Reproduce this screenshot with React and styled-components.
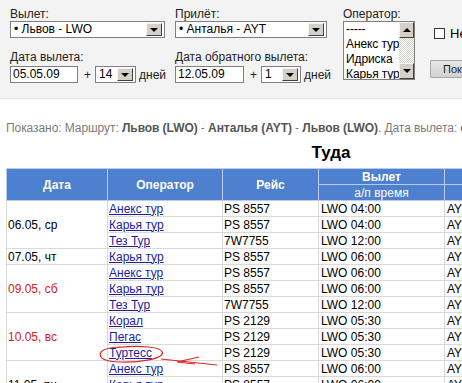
import React from "react";
import styled, { createGlobalStyle } from "styled-components";

const GlobalStyle = createGlobalStyle`
  html, body {
    margin: 0;
    padding: 0;
    background: #fff;
    overflow: hidden;
  }
  body {
    font-family: "Liberation Sans", Arial, sans-serif;
    font-size: 12px;
    color: #000;
  }
`;

const Page = styled.div`
  position: relative;
  width: 720px;
`;

const FilterPanel = styled.div`
  display: flex;
  align-items: flex-start;
  height: 99px;
  box-sizing: border-box;
  padding: 7px 0 0 10px;
  background: #f3f3f3;
  border-bottom: 1px solid #e8e8e8;
`;

const FieldColumn = styled.div`
  display: flex;
  flex-direction: column;
  flex-shrink: 0;
  width: ${(p) => p.$width}px;
  margin-right: ${(p) => p.$gap || 0}px;
`;

const Label = styled.div`
  font-size: 12px;
  line-height: 14px;
  color: #222;
  white-space: nowrap;
  margin-top: ${(p) => p.$top || 0}px;
`;

const SelectBox = styled.div`
  display: flex;
  align-items: center;
  flex-shrink: 0;
  width: ${(p) => p.$width}px;
  height: 17px;
  box-sizing: border-box;
  padding: 1px 2px 1px 1px;
  border: 1px solid #7f7f7f;
  background: #fff;
`;

const SelectValue = styled.span`
  flex: 1;
  padding-left: 2px;
  font-size: 12px;
  line-height: 13px;
  white-space: nowrap;
  overflow: hidden;
`;

const DropButton = styled.span`
  display: flex;
  align-items: center;
  justify-content: center;
  width: 16px;
  height: 13px;
  box-sizing: border-box;
  background: #d4d0c8;
  border: 1px solid;
  border-color: #f4f4f4 #404040 #404040 #f4f4f4;
  &::after {
    content: "";
    border-left: 4px solid transparent;
    border-right: 4px solid transparent;
    border-top: 4px solid #000;
  }
`;

const DateRow = styled.div`
  display: flex;
  align-items: center;
  margin-top: 2px;
  white-space: nowrap;
`;

const DateInput = styled.div`
  flex-shrink: 0;
  width: ${(p) => p.$width}px;
  height: 17px;
  box-sizing: border-box;
  padding-left: 2px;
  border: 1px solid #7f7f7f;
  background: #fff;
  font-size: 12px;
  line-height: 15px;
`;

const Plus = styled.span`
  margin: 0 4px 0 6px;
  color: #222;
`;

const Days = styled.span`
  margin-left: 3px;
  color: #222;
`;

const ListBox = styled.div`
  display: flex;
  width: 72px;
  height: 59px;
  box-sizing: border-box;
  border: 1px solid #7f7f7f;
  background: #fff;
`;

const ListItems = styled.div`
  flex: 1;
  padding: 0 0 0 2px;
  overflow: hidden;
`;

const ListItem = styled.div`
  font-size: 12px;
  line-height: 15px;
  letter-spacing: -0.1px;
  white-space: nowrap;
`;

const ScrollBar = styled.div`
  display: flex;
  flex-direction: column;
  justify-content: space-between;
  width: 15px;
  background-color: #fff;
  background-image: conic-gradient(#d4d0c8 25%, #fff 0 50%, #d4d0c8 0 75%, #fff 0);
  background-size: 2px 2px;
`;

const ScrollArrow = styled.div`
  display: flex;
  align-items: center;
  justify-content: center;
  height: 16px;
  box-sizing: border-box;
  background: #d4d0c8;
  border: 1px solid;
  border-color: #f4f4f4 #404040 #404040 #f4f4f4;
  &::after {
    content: "";
    border-left: 4px solid transparent;
    border-right: 4px solid transparent;
    ${(p) => (p.$up ? "border-bottom: 4px solid #000;" : "border-top: 4px solid #000;")}
  }
`;

const CheckRow = styled.label`
  display: flex;
  align-items: center;
  margin: 19px 0 0 4px;
  font-size: 13px;
  white-space: nowrap;
`;

const CheckSquare = styled.span`
  width: 11px;
  height: 11px;
  box-sizing: border-box;
  margin-right: 5px;
  border: 1px solid #333;
  background: #fff;
`;

const ShowButton = styled.button`
  margin-top: 19px;
  height: 18px;
  padding: 0 12px;
  border: 1px solid #a8a8a8;
  border-radius: 1px;
  background: linear-gradient(#e6e6e6, #d2d2d2);
  font-family: "Liberation Sans", Arial, sans-serif;
  font-size: 11px;
  color: #222;
  white-space: nowrap;
`;

const Content = styled.div`
  padding: 0 6px;
`;

const Summary = styled.div`
  margin-top: 22px;
  font-size: 12px;
  line-height: 14px;
  letter-spacing: -0.07px;
  color: #7b7b7b;
  white-space: nowrap;
  b {
    color: #555;
  }
`;

const Heading = styled.h2`
  width: 650px;
  margin: 8px 0 5px;
  text-align: center;
  font-size: 17px;
  line-height: 20px;
  font-weight: bold;
  color: #000;
`;

const Schedule = styled.table`
  width: 654px;
  border-collapse: collapse;
  table-layout: fixed;
  font-size: 12px;
`;

const Row = styled.tr`
  height: 16px;
`;

const HeadCell = styled.th`
  padding: 0;
  border: 1px solid #b7cbed;
  background: #4d80cf;
  color: #fff;
  line-height: 14px;
  text-align: center;
  font-weight: ${(p) => (p.$light ? "normal" : "bold")};
`;

const Cell = styled.td`
  padding: 0 0 0 ${(p) => p.$pad || 1}px;
  border: 1px solid #d9d9d9;
  line-height: 14px;
  white-space: nowrap;
  overflow: hidden;
  color: ${(p) => (p.$red ? "#d01c1c" : "#000")};
`;

const OperatorLink = styled.a`
  color: #1d1d9e;
  text-decoration: underline;
`;

const Annotation = styled.svg`
  position: absolute;
  top: 0;
  left: 0;
  pointer-events: none;
`;

const schedule = [
  {
    date: "06.05, ср",
    flights: [
      ["Анекс тур", "PS 8557", "LWO 04:00", "AYT 07:10"],
      ["Карья тур", "PS 8557", "LWO 04:00", "AYT 07:10"],
      ["Тез Тур", "7W7755", "LWO 12:00", "AYT 15:05"],
    ],
  },
  {
    date: "07.05, чт",
    flights: [["Карья тур", "PS 8557", "LWO 06:00", "AYT 09:10"]],
  },
  {
    date: "09.05, сб",
    red: true,
    flights: [
      ["Анекс тур", "PS 8557", "LWO 06:00", "AYT 09:10"],
      ["Карья тур", "PS 8557", "LWO 06:00", "AYT 09:10"],
      ["Тез Тур", "7W7755", "LWO 12:00", "AYT 15:05"],
    ],
  },
  {
    date: "10.05, вс",
    red: true,
    flights: [
      ["Корал", "PS 2129", "LWO 05:30", "AYT 08:40"],
      ["Пегас", "PS 2129", "LWO 05:30", "AYT 08:40"],
      ["Туртесс", "PS 2129", "LWO 05:30", "AYT 08:40"],
    ],
  },
  {
    date: "11.05, пн",
    flights: [
      ["Анекс тур", "PS 8557", "LWO 06:00", "AYT 09:10"],
      ["Карья тур", "PS 8557", "LWO 06:00", "AYT 09:10"],
      ["Тез Тур", "7W7755", "LWO 12:00", "AYT 15:05"],
    ],
  },
];

const Select = ({ width, value }) => (
  <SelectBox $width={width}>
    <SelectValue>{value}</SelectValue>
    <DropButton />
  </SelectBox>
);

const App = () => {
  return (
    <Page>
      <GlobalStyle />
      <FilterPanel>
        <FieldColumn $width={155} $gap={10}>
          <Label>Вылет:</Label>
          <Select width={155} value="• Львов - LWO" />
          <Label $top={12}>Дата вылета:</Label>
          <DateRow>
            <DateInput $width={68}>05.05.09</DateInput>
            <Plus>+</Plus>
            <Select width={41} value="14" />
            <Days>дней</Days>
          </DateRow>
        </FieldColumn>
        <FieldColumn $width={156} $gap={12}>
          <Label>Прилёт:</Label>
          <Select width={152} value="• Анталья - AYT" />
          <Label $top={12}>Дата обратного вылета:</Label>
          <DateRow>
            <DateInput $width={69}>12.05.09</DateInput>
            <Plus>+</Plus>
            <Select width={40} value="1" />
            <Days>дней</Days>
          </DateRow>
        </FieldColumn>
        <FieldColumn $width={72} $gap={15}>
          <Label>Оператор:</Label>
          <ListBox>
            <ListItems>
              <ListItem>-----</ListItem>
              <ListItem>Анекс тур</ListItem>
              <ListItem>Идриска</ListItem>
              <ListItem>Карья тур</ListItem>
            </ListItems>
            <ScrollBar>
              <ScrollArrow $up />
              <ScrollArrow />
            </ScrollBar>
          </ListBox>
        </FieldColumn>
        <FieldColumn $width={120}>
          <CheckRow>
            <CheckSquare />
            Не показывать
          </CheckRow>
          <div>
            <ShowButton type="button">Показать</ShowButton>
          </div>
        </FieldColumn>
      </FilterPanel>

      <Content>
        <Summary>
          Показано: Маршрут: <b>Львов (LWO)</b> - <b>Анталья (AYT)</b> - <b>Львов (LWO)</b>. Дата вылета:{" "}
          <b>с 05.05.09 по 19.05.09</b>
        </Summary>
        <Heading>Туда</Heading>
        <Schedule>
          <colgroup>
            <col style={{ width: 101 }} />
            <col style={{ width: 115 }} />
            <col style={{ width: 96 }} />
            <col style={{ width: 126 }} />
            <col style={{ width: 126 }} />
            <col style={{ width: 90 }} />
          </colgroup>
          <thead>
            <Row>
              <HeadCell rowSpan={2}>Дата</HeadCell>
              <HeadCell rowSpan={2}>Оператор</HeadCell>
              <HeadCell rowSpan={2}>Рейс</HeadCell>
              <HeadCell>Вылет</HeadCell>
              <HeadCell>Прилёт</HeadCell>
              <HeadCell rowSpan={2}>Места</HeadCell>
            </Row>
            <Row>
              <HeadCell $light>а/п время</HeadCell>
              <HeadCell $light>а/п время</HeadCell>
            </Row>
          </thead>
          <tbody>
            {schedule.map((day) =>
              day.flights.map((f, i) => (
                <Row key={day.date + i}>
                  {i === 0 && (
                    <Cell rowSpan={day.flights.length} $red={day.red}>
                      {day.date}
                    </Cell>
                  )}
                  <Cell>
                    <OperatorLink href="#">{f[0]}</OperatorLink>
                  </Cell>
                  <Cell>{f[1]}</Cell>
                  <Cell $pad={2}>{f[2]}</Cell>
                  <Cell $pad={2}>{f[3]}</Cell>
                  <Cell $pad={2}>есть</Cell>
                </Row>
              ))
            )}
          </tbody>
        </Schedule>
      </Content>

      <Annotation width="462" height="383" viewBox="0 0 462 383">
        <path
          d="M118,347.5 C140,345 162,347 162.5,352.5 C163,359 140,362.5 120,362 C104,361.5 99,358 100.5,353 C102,349 108,347.5 121,347"
          fill="none"
          stroke="#e0261e"
          strokeWidth="1.2"
        />
        <path d="M161,359 Q190,362 217,365" fill="none" stroke="#e0261e" strokeWidth="1.2" />
        <path d="M199,357 L177,362 L195,364" fill="none" stroke="#e0261e" strokeWidth="1.2" />
      </Annotation>
    </Page>
  );
};

export default App;
